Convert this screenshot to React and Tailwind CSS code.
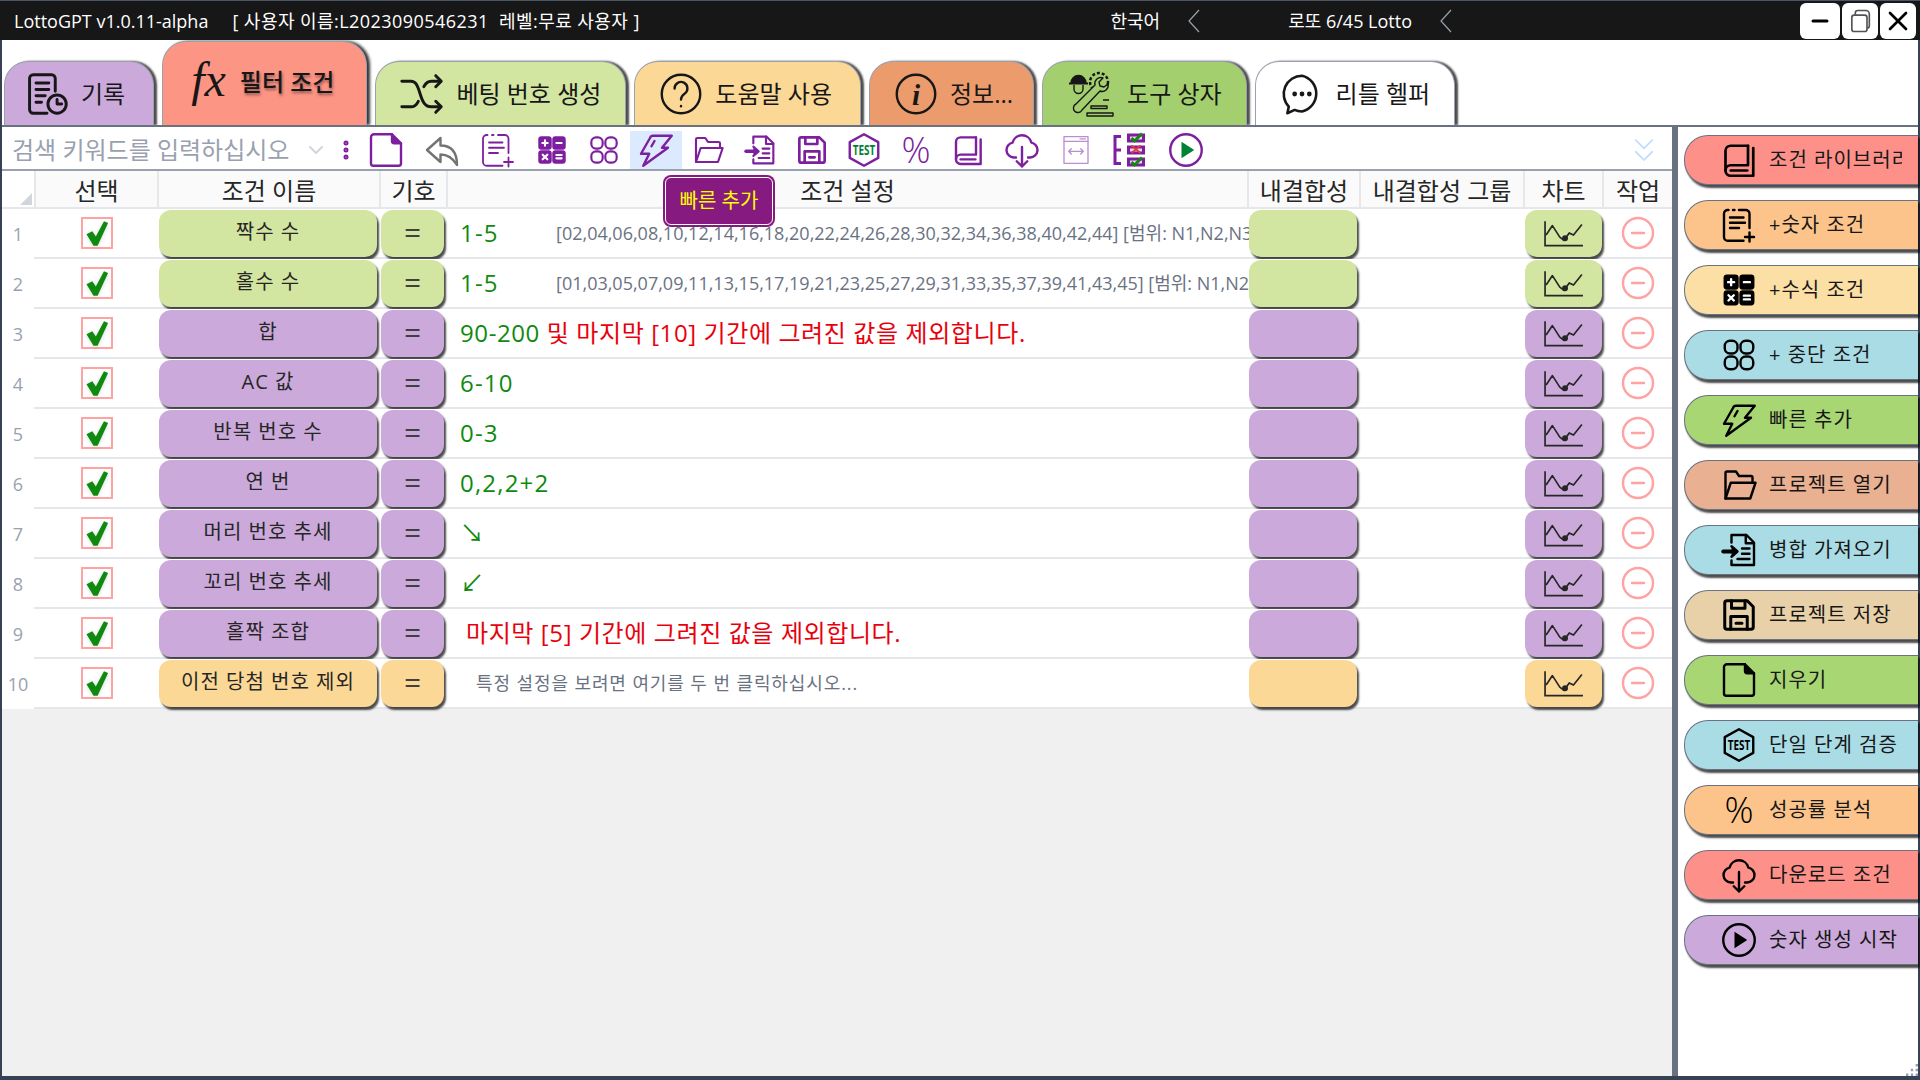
import { ChevronDown, ChevronsDown, CircleMinus, EllipsisVertical, Minus, X } from "lucide-react"

const Svg = ({ children, className = "size-9", sw = 1.6, box = "0 0 24 24" }) => (
    <svg viewBox={box} fill="none" stroke="currentColor" strokeWidth={sw} strokeLinecap="round" strokeLinejoin="round" className={className}>
        {children}
    </svg>
)

const DocIcon = (p) => (
    <Svg {...p}>
        <path d="M4 1.5h12l6 6V21a1.5 1.5 0 0 1-1.5 1.5h-17A1.5 1.5 0 0 1 2 21V3.500a2 2 0 0 1 2-2z" />
        <path d="M16 1.500v4.500a1.500 1.500 0 0 0 1.500 1.500H22" fill="currentColor" />
    </Svg>
)

const BackIcon = (p) => (
    <Svg {...p}>
        <path d="M11 4 L2 12 L11 20 V15 C16 15 19 17 22 22 C22 13 18 9 11 9 Z" />
    </Svg>
)

const NumberDocIcon = (p) => (
    <Svg {...p}>
        <path d="M5 2H4.500A2.500 2.500 0 0 0 2 4.500V20a2.500 2.500 0 0 0 2.500 2.500H15" />
        <path d="M8 2h1M12 2h4.500A2.500 2.500 0 0 1 19 4.500V14" />
        <path d="M6 7h9M6 10.500h10M6 14h6" />
        <path d="M19 17v6M16 20h6" />
    </Svg>
)

const CalcIcon = (p) => (
    <Svg {...p}>
        <rect x="2.500" y="2.500" width="8.500" height="8.500" rx="1.500" fill="currentColor" />
        <rect x="13" y="2.500" width="8.500" height="8.500" rx="1.500" fill="currentColor" />
        <rect x="2.500" y="13" width="8.500" height="8.500" rx="1.500" fill="currentColor" />
        <rect x="13" y="13" width="8.500" height="8.500" rx="1.500" fill="currentColor" />
        <path d="M6.750 4.750v4M4.750 6.750h4M15.250 6.750h4M5 15.500l3.500 3.500M8.500 15.500L5 19M15.250 15.750h4M15.250 18.250h4" stroke="white" />
    </Svg>
)

const RingsIcon = (p) => (
    <Svg {...p}>
        <rect x="2.500" y="2.500" width="8.500" height="8.500" rx="3.500" />
        <rect x="13" y="2.500" width="8.500" height="8.500" rx="3.500" />
        <rect x="2.500" y="13" width="8.500" height="8.500" rx="3.500" />
        <rect x="13" y="13" width="8.500" height="8.500" rx="3.500" />
    </Svg>
)

const BoltIcon = (p) => (
    <Svg {...p}>
        <path d="M8 4 Q8.500 2.500 10 2.500 H22.500 L16 10.500 H20 L3.500 22.500 L7.500 14.500 H2 Z" />
        <path d="M11 6l-2 3.500" />
    </Svg>
)

const FolderIcon = (p) => (
    <Svg {...p}>
        <path d="M3 21V4a1 1 0 0 1 1-1h6l2 3h8a1 1 0 0 1 1 1v3" />
        <path d="M3 21 L6.500 10.500 H23 L19.500 21 Z" />
    </Svg>
)

const ImportIcon = (p) => (
    <Svg {...p}>
        <path d="M7 7V2h10l5 5v15H7v-3" />
        <path d="M16.500 2v5.500H22" />
        <path d="M1.500 13h8" strokeWidth="2.600" />
        <path d="M7 9.500l4 3.500-4 3.500" fill="currentColor" />
        <path d="M14 11h5M14 14.500h5M11 18h8" />
    </Svg>
)

const SaveIcon = (p) => (
    <Svg {...p} sw={2}>
        <path d="M4 2.500h13.500l4 4V20a1.500 1.500 0 0 1-1.500 1.500H4A1.500 1.500 0 0 1 2.500 20V4A1.500 1.500 0 0 1 4 2.500z" />
        <path d="M7 2.500v5h9v-5M6.500 21.500V13h11v8.500M10 17.500h4" />
    </Svg>
)

const TestIcon = ({ className = "size-9", textClass = "fill-black" }) => (
    <svg viewBox="0 0 24 24" fill="none" className={className}>
        <path d="M12 1.500l9.500 5.250v10.500L12 22.500l-9.500-5.250V6.750z" stroke="currentColor" strokeWidth="1.600" strokeLinejoin="round" />
        <text x="12" y="15.500" textAnchor="middle" textLength="15" lengthAdjust="spacingAndGlyphs" fontSize="10" fontWeight="700" className={textClass}>TEST</text>
    </svg>
)

const PercentIcon = ({ className = "" }) => (
    <span className={`flex size-9 items-center justify-center text-4xl font-light ${className}`}>%</span>
)

const BookIcon = (p) => (
    <Svg {...p} sw={1.800}>
        <path d="M18 2.500H6.500A3.500 3.500 0 0 0 3 6v13" />
        <path d="M18 2.500v13H6.500a3.500 3.500 0 0 0 0 7H21.500V4" />
        <path d="M6.500 19h11" />
    </Svg>
)

const CloudIcon = (p) => (
    <Svg {...p}>
        <path d="M8 17H6.500a5 5 0 0 1-.8-9.900A6.500 6.500 0 0 1 18.300 7.100 5 5 0 0 1 17.500 17H16" />
        <path d="M12 10v13M8.500 19.500L12 23l3.500-3.500" />
    </Svg>
)

const WindowIcon = (p) => (
    <Svg {...p} sw={1}>
        <rect x="3" y="2" width="18" height="20" />
        <path d="M3 5.500h18M6.500 13h11M8.500 11l-2 2 2 2M15.500 11l2 2-2 2M15 3.700h4" />
    </Svg>
)

const ChecklistIcon = ({ className = "size-9" }) => (
    <svg viewBox="0 0 24 24" fill="none" className={className}>
        <path d="M6 3H2v18h4M2 12h4" stroke="#7d1f9e" strokeWidth="2" />
        <path d="M10 1h12v6H10zM10 9h12v6H10zM10 17h12v6H10z" fill="#7d1f9e" />
        <path d="M12 3h8v2h-8zM12 11h8v2h-8zM12 19h8v2h-8z" fill="#e9d5f2" />
        <path d="M13 4l2 2 5-5M13 20l2 2 5-5" stroke="#15870f" strokeWidth="2" />
        <path d="M13 9l6 5M19 9l-6 5" stroke="#e23b3b" strokeWidth="1.200" />
    </svg>
)

const PlayIcon = ({ className = "size-9", fillClass = "fill-black" }) => (
    <svg viewBox="0 0 24 24" fill="none" className={className}>
        <circle cx="12" cy="12" r="10.500" stroke="currentColor" strokeWidth="1.600" />
        <path d="M9 6.500v11l8.500-5.500z" className={fillClass} />
    </svg>
)

const HistoryIcon = (p) => (
    <Svg {...p}>
        <path d="M12 22.500H4.500A2 2 0 0 1 2.500 20.500V3.500a2 2 0 0 1 2-2h10a2 2 0 0 1 2 2v7" />
        <path d="M6 6h7M6 9.500h7M6 13h5M6 16.500h3" />
        <circle cx="17.500" cy="17.500" r="5" />
        <path d="M17.500 15v2.500h2.500" />
    </Svg>
)

const ShuffleIcon = (p) => (
    <Svg {...p}>
        <path d="M1 5h5c2.500 0 3.500 2 5 7s3 7 6 7h5" />
        <path d="M1 19h5c2 0 3-1 4-3M13 8c1-2 2-3 4-3h5" />
        <path d="M19.500 2l3 3-3 3M19.500 16l3 3-3 3" />
    </Svg>
)

const HelpIcon = (p) => (
    <Svg {...p} sw={1.300}>
        <circle cx="12" cy="12" r="10.500" />
        <path d="M8.500 9a3.500 3.500 0 1 1 5.500 2.800c-1.300 1-2 1.700-2 3.200" />
        <path d="M12 18.500v.2" />
    </Svg>
)

const InfoIcon = ({ className = "size-10" }) => (
    <svg viewBox="0 0 24 24" fill="none" className={className}>
        <circle cx="12" cy="12" r="10.500" stroke="currentColor" strokeWidth="1.300" />
        <text x="12" y="18" textAnchor="middle" fontSize="16" fontWeight="700" fontStyle="italic" fontFamily="'Liberation Serif', serif" fill="currentColor">i</text>
    </svg>
)

const ToolsIcon = ({ className = "size-11" }) => (
    <svg viewBox="0 0 48 48" fill="none" stroke="currentColor" strokeWidth="1.400" strokeLinejoin="round" className={className}>
        <path d="M4 13a7.500 7.500 0 0 1 15 0z" fill="currentColor" />
        <path d="M2 13.500h19" strokeWidth="2" />
        <path d="M7 15v4a4.500 4.500 0 0 0 9 0v-4" />
        <circle cx="32" cy="12" r="9" strokeDasharray="3 2" strokeWidth="2.500" />
        <path d="M36 8a6 6 0 0 0-8 7L9 34a4.500 4.500 0 1 0 6 6l18-19a6 6 0 0 0 8-7l-4 3-4-1-1-4z" fill="#a4cf6e" />
        <path d="M24 36h16v2.500H24zM36 30h6M20 43h26v3H20z" />
    </svg>
)

const ChatIcon = ({ className = "size-10" }) => (
    <svg viewBox="0 0 24 24" fill="none" stroke="currentColor" strokeWidth="1.400" strokeLinejoin="round" className={className}>
        <path d="M12 2a10 10 0 0 1 0 19.500c-1.500 0-3-.3-4-.8L4 22.500l.8-3.600A10 10 0 0 1 12 2z" />
        <circle cx="8" cy="12" r=".6" fill="currentColor" />
        <circle cx="12" cy="12" r=".6" fill="currentColor" />
        <circle cx="16" cy="12" r=".6" fill="currentColor" />
    </svg>
)

const ChartIcon = () => (
    <svg viewBox="0 0 38 26" fill="none" stroke="currentColor" strokeWidth="1.600" className="h-7 w-10 text-neutral-800">
        <path d="M1 1v23h36" />
        <path d="M2 14L8 5l7 11 4 3 5-7 4 2 8-10" strokeLinejoin="round" />
        <circle cx="20" cy="17" r="2" fill="currentColor" />
    </svg>
)

const Arrow = () => (
    <svg viewBox="0 0 12 24" fill="none" stroke="currentColor" strokeWidth="1.200" className="h-6 w-3 text-gray-400">
        <path d="M11 1L1 12l10 11" />
    </svg>
)

const Tick = () => (
    <svg viewBox="0 0 24 24" className="size-7 fill-[#0f8a0f] drop-shadow-sm">
        <path d="M3 13l5-2.500 3 4.500L18 2l3.500 1.500L12.500 23H9z" />
    </svg>
)

const tabs = [
    { label: "기록", color: "bg-[#cbaadb]", icon: <HistoryIcon className="size-11" />, pad: "pl-5 pr-7" },
    { label: "베팅 번호 생성", color: "bg-[#d2e5a1]", icon: <ShuffleIcon className="size-11" />, pad: "pl-6 pr-6" },
    { label: "도움말 사용", color: "bg-[#fbd896]", icon: <HelpIcon className="size-11" />, pad: "pl-6 pr-7" },
    { label: "정보...", color: "bg-[#ec9b6c]", icon: <InfoIcon className="size-11" />, pad: "pl-6 pr-5" },
    { label: "도구 상자", color: "bg-[#a4cf6e]", icon: <ToolsIcon className="size-12" />, pad: "pl-6 pr-6" },
    { label: "리틀 헬퍼", color: "bg-white", icon: <ChatIcon className="size-11" />, pad: "pl-6 pr-6" },
]

const TAB = "flex h-16 shrink-0 items-center gap-3 rounded-t-3xl border border-b-0 border-gray-400 text-2xl text-neutral-900 shadow-[3px_0_2px_rgba(0,0,0,0.7)]"
const GREEN = "text-[#0f8a0f]"

const rows = [
    { name: "짝수 수", color: "bg-[#d2e5a1]", value: <><span className={`w-24 shrink-0 text-2xl tracking-wider ${GREEN}`}>1-5</span><span className="text-lg whitespace-nowrap text-gray-500">[02,04,06,08,10,12,14,16,18,20,22,24,26,28,30,32,34,36,38,40,42,44] [범위: N1,N2,N3</span></> },
    { name: "홀수 수", color: "bg-[#d2e5a1]", value: <><span className={`w-24 shrink-0 text-2xl tracking-wider ${GREEN}`}>1-5</span><span className="text-lg whitespace-nowrap text-gray-500">[01,03,05,07,09,11,13,15,17,19,21,23,25,27,29,31,33,35,37,39,41,43,45] [범위: N1,N2,</span></> },
    { name: "합", color: "bg-[#cbaadb]", value: <span className="text-2xl tracking-wide whitespace-nowrap text-red-600"><span className={GREEN}>90-200</span> 및 마지막 [10] 기간에 그려진 값을 제외합니다.</span> },
    { name: "AC 값", color: "bg-[#cbaadb]", value: <span className={`text-2xl tracking-wider ${GREEN}`}>6-10</span> },
    { name: "반복 번호 수", color: "bg-[#cbaadb]", value: <span className={`text-2xl tracking-wider ${GREEN}`}>0-3</span> },
    { name: "연 번", color: "bg-[#cbaadb]", value: <span className={`text-2xl tracking-wider ${GREEN}`}>0,2,2+2</span> },
    { name: "머리 번호 추세", color: "bg-[#cbaadb]", value: <span className={`text-2xl ${GREEN}`}>↘</span> },
    { name: "꼬리 번호 추세", color: "bg-[#cbaadb]", value: <span className={`text-2xl ${GREEN}`}>↙</span> },
    { name: "홀짝 조합", color: "bg-[#cbaadb]", value: <span className="pl-1.5 text-2xl tracking-wide whitespace-nowrap text-red-600">마지막 [5] 기간에 그려진 값을 제외합니다.</span> },
    { name: "이전 당첨 번호 제외", color: "bg-[#fbd896]", value: <span className="pl-4 text-lg tracking-wider whitespace-nowrap text-gray-500">특정 설정을 보려면 여기를 두 번 클릭하십시오...</span> },
]

const side = [
    { label: "조건 라이브러리", color: "bg-[#fd918a]", Icon: BookIcon },
    { label: "+숫자 조건", color: "bg-[#fcc48a]", Icon: NumberDocIcon },
    { label: "+수식 조건", color: "bg-[#fbdfa4]", Icon: CalcIcon },
    { label: "+ 중단 조건", color: "bg-[#aadce5]", Icon: RingsIcon },
    { label: "빠른 추가", color: "bg-[#a8d672]", Icon: BoltIcon },
    { label: "프로젝트 열기", color: "bg-[#e9b092]", Icon: FolderIcon },
    { label: "병합 가져오기", color: "bg-[#aadce5]", Icon: ImportIcon },
    { label: "프로젝트 저장", color: "bg-[#e8d1a8]", Icon: SaveIcon },
    { label: "지우기", color: "bg-[#a8d672]", Icon: DocIcon },
    { label: "단일 단계 검증", color: "bg-[#aadce5]", Icon: TestIcon },
    { label: "성공률 분석", color: "bg-[#fcc48a]", Icon: PercentIcon },
    { label: "다운로드 조건", color: "bg-[#fd918a]", Icon: CloudIcon },
    { label: "숫자 생성 시작", color: "bg-[#cbaadb]", Icon: PlayIcon },
]

const COLS = "grid grid-cols-[125px_222px_67px_1fr_112px_164px_79px_68px]"
const BTN = "mt-px flex items-center justify-center rounded-xl shadow-[2px_3px_2px_rgba(0,0,0,0.7)]"
const PURPLE = "text-[#7d1f9e]"

const App = () => {
    return (
        <div className="flex h-screen w-full flex-col overflow-hidden bg-neutral-800 font-['Open_Sans','Noto_Sans_CJK_KR',sans-serif]">

            <div className="flex h-10 shrink-0 items-start border-t border-gray-600 bg-neutral-900 text-lg text-white">
                <div className="flex h-full items-center pl-3.5 whitespace-pre">
                    <span>LottoGPT v1.0.11-alpha</span>
                    <span className="ml-6 tracking-wide">[ 사용자 이름:L2023090546231  레벨:무료 사용자 ]</span>
                </div>
                <div className="mr-87 ml-auto flex h-full items-center">
                    <span>한국어</span>
                    <div className="ml-7"><Arrow /></div>
                    <span className="ml-22">로또 6/45 Lotto</span>
                    <div className="ml-7"><Arrow /></div>
                </div>
                <div className="mt-0.5 mr-1 flex h-9 gap-0.5 text-black">
                    <div className="flex w-10 items-center justify-center rounded-md bg-white"><Minus className="size-6" strokeWidth={3} /></div>
                    <div className="flex w-9 items-center justify-center rounded-md bg-white">
                        <svg viewBox="0 0 24 24" fill="none" stroke="currentColor" strokeWidth="1.400" className="size-7 text-neutral-600">
                            <rect x="5" y="7" width="13" height="14" rx="2" />
                            <path d="M8 7V5a2 2 0 0 1 2-2h7a3 3 0 0 1 3 3v10a2 2 0 0 1-2 2" />
                        </svg>
                    </div>
                    <div className="flex w-9 items-center justify-center rounded-md bg-white"><X className="size-8" strokeWidth={2} /></div>
                </div>
            </div>

            <div className="relative flex min-h-0 flex-1 flex-col border-x-2 border-b-4 border-gray-700 bg-white">

                <div className="flex h-[85px] shrink-0 items-end gap-2 overflow-hidden pl-0.5">
                    <div className={`${TAB} ${tabs[0].color} ${tabs[0].pad}`}>{tabs[0].icon}<span>{tabs[0].label}</span></div>
                    <div className="flex h-[84px] shrink-0 items-start gap-3.5 rounded-t-3xl border border-b-0 border-gray-400 bg-[#fd9585] pt-3.5 pr-8 pl-7 text-neutral-900 shadow-[3px_0_3px_rgba(0,0,0,0.8)]">
                        <span className="font-['Liberation_Serif',serif] text-5xl italic">fx</span>
                        <span className="pt-2.5 text-2xl font-medium [text-shadow:1px_2px_3px_rgba(0,0,0,0.45)]">필터 조건</span>
                    </div>
                    {tabs.slice(1).map((tab) => (
                        <div key={tab.label} className={`${TAB} ${tab.color} ${tab.pad}`}>
                            {tab.icon}
                            <span className="whitespace-nowrap">{tab.label}</span>
                        </div>
                    ))}
                </div>

                <div className="flex min-h-0 flex-1 border-t-2 border-gray-500">

                    <div className="relative flex min-w-0 flex-1 flex-col bg-[#f0f0f0]">

                        <div className="flex h-11 shrink-0 items-center border-b-2 border-gray-400 bg-white pt-1 pl-2.5">
                            <span className="w-72 overflow-hidden text-2xl whitespace-nowrap text-gray-400">검색 키워드를 입력하십시오</span>
                            <ChevronDown className="ml-1 size-6 text-gray-300" />
                            <EllipsisVertical className={`ml-1.5 size-6 ${PURPLE}`} strokeWidth={3} />
                            <div className={`flex h-full items-center ${PURPLE}`}>
                                <div className="flex w-14 justify-center"><DocIcon /></div>
                                <div className="flex w-14 justify-center text-neutral-500"><BackIcon /></div>
                                <div className="flex w-14 justify-center"><NumberDocIcon sw={1.200} /></div>
                                <div className="flex w-13 justify-center"><CalcIcon className="size-8" /></div>
                                <div className="flex w-13 justify-center"><RingsIcon className="size-8" /></div>
                                <div className="flex h-full w-13 items-center justify-center bg-blue-100"><BoltIcon /></div>
                                <div className="flex w-13 justify-center"><FolderIcon className="size-8" /></div>
                                <div className="flex w-13 justify-center"><ImportIcon className="size-8" /></div>
                                <div className="flex w-13 justify-center"><SaveIcon className="size-8" /></div>
                                <div className="flex w-13 justify-center"><TestIcon textClass="fill-green-700" /></div>
                                <div className="flex w-13 justify-center"><PercentIcon className="text-3xl" /></div>
                                <div className="flex w-13 justify-center"><BookIcon className="size-8" /></div>
                                <div className="flex w-14 justify-center"><CloudIcon /></div>
                                <div className="flex w-13 justify-center text-[#b98fd0]"><WindowIcon className="size-8" /></div>
                                <div className="flex w-14 justify-center"><ChecklistIcon /></div>
                                <div className="flex w-14 justify-center"><PlayIcon fillClass="fill-green-700" /></div>
                            </div>
                            <ChevronsDown className="mr-2 ml-auto size-10 text-blue-200" strokeWidth={1} />
                        </div>

                        <div className="flex h-9.5 shrink-0 border-b-2 border-gray-200 bg-neutral-50 text-2xl leading-10 text-neutral-800">
                            <div className="flex w-8 items-end justify-end bg-white pr-0.5 pb-0.5">
                                <svg viewBox="0 0 12 12" className="size-3 fill-gray-300"><path d="M12 0v12H0z" /></svg>
                            </div>
                            <div className={`${COLS} flex-1 text-center`}>
                                <div className="border-x-2 border-gray-200">선택</div>
                                <div className="border-r-2 border-gray-200">조건 이름</div>
                                <div className="border-r-2 border-gray-200">기호</div>
                                <div className="border-r-2 border-gray-200">조건 설정</div>
                                <div className="border-r-2 border-gray-200">내결합성</div>
                                <div className="border-r-2 border-gray-200 whitespace-nowrap">내결합성 그룹</div>
                                <div className="border-r-2 border-gray-200">차트</div>
                                <div>작업</div>
                            </div>
                        </div>

                        <div className="grid auto-rows-[50px]">
                            {rows.map((row, i) => (
                                <div key={row.name} className="flex bg-white">
                                    <div className="flex w-8 items-center justify-center text-lg text-gray-400">{i + 1}</div>
                                    <div className={`${COLS} flex-1 border-b-2 border-gray-200`}>
                                        <div className="flex items-center justify-center">
                                            <div className="flex size-8 items-center justify-center border-2 border-red-300 bg-white">
                                                <Tick />
                                            </div>
                                        </div>
                                        <div className={`${BTN} ${row.color} mr-1 pb-1 text-xl tracking-wider text-neutral-800`}>{row.name}</div>
                                        <div className={`${BTN} ${row.color} mr-1 pb-1 text-3xl text-neutral-700`}>=</div>
                                        <div className="flex min-w-0 items-center overflow-hidden pl-3">{row.value}</div>
                                        <div className={`${BTN} ${row.color} mr-1`} />
                                        <div />
                                        <div className={`${BTN} ${row.color} mr-0.5`}><ChartIcon /></div>
                                        <div className="flex items-center justify-center">
                                            <CircleMinus className="size-9 text-red-300" strokeWidth={1.600} />
                                        </div>
                                    </div>
                                </div>
                            ))}
                        </div>

                        <div className="absolute top-12 left-[661px] flex h-13 w-28 rounded-lg bg-[#871a80] p-0.5">
                            <div className="flex flex-1 items-center justify-center rounded-md border border-white text-xl text-[#ffff00]">빠른 추가</div>
                        </div>
                    </div>

                    <div className="w-1.5 shrink-0 bg-gray-500 shadow-lg" />

                    <div className="grid w-60 shrink-0 auto-rows-[65px] pt-2 pl-1.5">
                        {side.map(({ label, color, Icon }) => (
                            <div key={label} className={`${color} flex h-12.5 items-center gap-3 overflow-hidden rounded-l-3xl border border-r-0 border-gray-500 pr-4 pl-9 shadow-[2px_3px_2px_rgba(0,0,0,0.7)]`}>
                                <Icon className="size-9 shrink-0" />
                                <span className="overflow-hidden text-xl tracking-wider whitespace-nowrap text-neutral-900">{label}</span>
                            </div>
                        ))}
                    </div>
                </div>

                <svg viewBox="0 0 10 10" className="absolute right-0 bottom-0 size-3 fill-gray-400">
                    <path d="M8 0h2v2H8zM4 4h2v2H4zM8 4h2v2H8zM0 8h2v2H0zM4 8h2v2H4zM8 8h2v2H8z" />
                </svg>
            </div>
        </div>
    )
}

export default App
